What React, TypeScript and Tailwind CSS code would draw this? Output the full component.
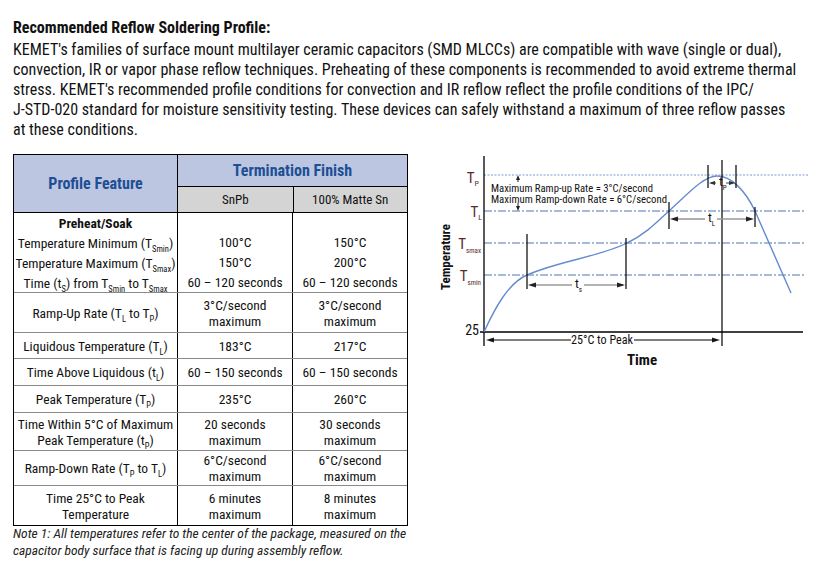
import type { ReactNode } from 'react';

const Sub = ({ children }: { children: ReactNode }) => (
  <span className="relative top-[4px] text-[8.5px] leading-none">{children}</span>
);

type Row = { h: string; feat: ReactNode; a: string[]; b: string[] };

const rows: Row[] = [
  { h: 'h-[40px]', feat: <>Ramp-Up Rate (T<Sub>L</Sub> to T<Sub>P</Sub>)</>, a: ['3°C/second', 'maximum'], b: ['3°C/second', 'maximum'] },
  { h: 'h-[26px]', feat: <>Liquidous Temperature (T<Sub>L</Sub>)</>, a: ['183°C'], b: ['217°C'] },
  { h: 'h-[27px]', feat: <>Time Above Liquidous (t<Sub>L</Sub>)</>, a: ['60 – 150 seconds'], b: ['60 – 150 seconds'] },
  { h: 'h-[27px]', feat: <>Peak Temperature (T<Sub>P</Sub>)</>, a: ['235°C'], b: ['260°C'] },
  { h: 'h-[38px]', feat: <>Time Within 5°C of Maximum<br />Peak Temperature (t<Sub>P</Sub>)</>, a: ['20 seconds', 'maximum'], b: ['30 seconds', 'maximum'] },
  { h: 'h-[35px]', feat: <>Ramp-Down Rate (T<Sub>P</Sub> to T<Sub>L</Sub>)</>, a: ['6°C/second', 'maximum'], b: ['6°C/second', 'maximum'] },
  { h: 'h-[40px]', feat: <>Time 25°C to Peak<br />Temperature</>, a: ['6 minutes', 'maximum'], b: ['8 minutes', 'maximum'] },
];

function Cell({ children, first }: { children: ReactNode; first?: boolean }) {
  return (
    <div className={`flex flex-col items-center justify-center text-center leading-[16px] ${first ? 'w-[163px]' : 'w-[115px] border-l border-black'}`}>
      {children}
    </div>
  );
}

function ProfileTable() {
  return (
    <div className="mt-[4px] w-[395px] border border-black text-[13.5px] text-[#111]">
      <div className="flex h-[58px] border-b border-black">
        <div className="flex w-[163px] items-center justify-center bg-[#bdc6e0] text-[16px] font-bold text-[#1d4f95]">
          Profile Feature
        </div>
        <div className="flex w-[230px] flex-col border-l border-black">
          <div className="flex h-[31px] items-center justify-center bg-[#bdc6e0] text-[16px] font-bold text-[#1d4f95]">
            Termination Finish
          </div>
          <div className="flex h-[26px] border-t border-black bg-[#d4d4d4] text-[13px]">
            <div className="flex w-[115px] items-center justify-center">SnPb</div>
            <div className="flex w-[115px] items-center justify-center border-l border-black">100% Matte Sn</div>
          </div>
        </div>
      </div>

      <div className="flex h-[79px] leading-[20px]">
        <div className="flex w-[163px] flex-col items-center justify-center text-center">
          <div className="font-bold">Preheat/Soak</div>
          <div>Temperature Minimum (T<Sub>Smin</Sub>)</div>
          <div>Temperature Maximum (T<Sub>Smax</Sub>)</div>
          <div>Time (t<Sub>S</Sub>) from T<Sub>Smin</Sub> to T<Sub>Smax</Sub></div>
        </div>
        <div className="flex w-[115px] flex-col items-center justify-end border-l border-black">
          <div>100°C</div>
          <div>150°C</div>
          <div>60 – 120 seconds</div>
        </div>
        <div className="flex w-[115px] flex-col items-center justify-end border-l border-black">
          <div>150°C</div>
          <div>200°C</div>
          <div>60 – 120 seconds</div>
        </div>
      </div>

      {rows.map((r, i) => (
        <div key={i} className={`flex border-t border-[#8a8a8a] ${r.h}`}>
          <Cell first>
            <div>{r.feat}</div>
          </Cell>
          <Cell>{r.a.map((l) => <div key={l}>{l}</div>)}</Cell>
          <Cell>{r.b.map((l) => <div key={l}>{l}</div>)}</Cell>
        </div>
      ))}
    </div>
  );
}

function ReflowChart() {
  const guide = '#4d74b8';
  return (
    <svg width="398" height="230" viewBox="0 0 398 230" className="ml-[12px] shrink-0">
      {/* temperature levels */}
      <line x1="64" y1="25" x2="388" y2="25" stroke="#7a9ad4" strokeDasharray="2 1.5" />
      <line x1="64" y1="61" x2="384" y2="61" stroke={guide} strokeDasharray="8 2 2 2" />
      <line x1="64" y1="93" x2="384" y2="93" stroke={guide} strokeDasharray="8 2 2 2" />
      <line x1="64" y1="125" x2="384" y2="125" stroke={guide} strokeDasharray="8 2 2 2" />

      {/* axes */}
      <line x1="64" y1="6" x2="64" y2="196" stroke="#000" strokeWidth="1.3" />
      <line x1="60" y1="182" x2="383" y2="182" stroke="#000" strokeWidth="1.3" />

      {/* profile curve */}
      <path
        d="M64,182 C74,160 88,133 107,125 C135,112 182,106 207,93 C226,84 238,71 249,61 C266,46 283,26 297,26 C311,26 325,40 335,61 L371,143"
        fill="none" stroke="#648bd0" strokeWidth="1.4"
      />

      {/* markers */}
      <g stroke="#000" strokeWidth="1.2">
        <line x1="107" y1="84" x2="107" y2="139" />
        <line x1="206" y1="88" x2="206" y2="139" />
        <line x1="249" y1="52" x2="249" y2="79" />
        <line x1="335" y1="57" x2="335" y2="77" />
        <line x1="288" y1="15" x2="288" y2="38" />
        <line x1="316" y1="15" x2="316" y2="38" />
        <line x1="302" y1="10" x2="302" y2="196" />
      </g>

      <g stroke="#9a9a9a" strokeWidth="1.6">
        <line x1="111" y1="135" x2="152" y2="135" />
        <line x1="164" y1="135" x2="203" y2="135" />
        <line x1="253" y1="69" x2="285" y2="69" />
        <line x1="297" y1="69" x2="331" y2="69" />
      </g>
      <g fill="#222">
        <polygon points="108,135 116,132.5 116,137.5" />
        <polygon points="205,135 197,132.5 197,137.5" />
        <polygon points="250,69 258,66.5 258,71.5" />
        <polygon points="334,69 326,66.5 326,71.5" />
        <polygon points="289,33 295,31 295,35" />
        <polygon points="315,33 309,31 309,35" />
        <polygon points="98,25 96,30 100,30" />
        <polygon points="98,61 96,56 100,56" />
        <polygon points="66,190 74,187.5 74,192.5" />
        <polygon points="300,190 292,187.5 292,192.5" />
      </g>
      <line x1="98" y1="29" x2="98" y2="32" stroke="#222" />
      <line x1="98" y1="53" x2="98" y2="57" stroke="#222" />
      <line x1="291" y1="33" x2="296" y2="33" stroke="#444" />
      <line x1="306" y1="33" x2="313" y2="33" stroke="#444" />

      <line x1="70" y1="190" x2="151" y2="190" stroke="#000" strokeWidth="1.2" />
      <line x1="214" y1="190" x2="296" y2="190" stroke="#000" strokeWidth="1.2" />

      {/* labels */}
      <g fill="#111">
        <text x="155" y="138" fontSize="13">t<tspan fontSize="7" dy="4">s</tspan></text>
        <text x="288" y="72" fontSize="13">t<tspan fontSize="7" dy="4">L</tspan></text>
        <text x="299" y="36" fontSize="13">t<tspan fontSize="7" dy="4">P</tspan></text>
        <text x="71" y="42" fontSize="11.5" textLength="162" lengthAdjust="spacingAndGlyphs">Maximum Ramp-up Rate = 3°C/second</text>
        <text x="71" y="52.5" fontSize="11.5" textLength="176" lengthAdjust="spacingAndGlyphs">Maximum Ramp-down Rate = 6°C/second</text>
        <text x="151" y="194" fontSize="13" textLength="62" lengthAdjust="spacingAndGlyphs">25°C to Peak</text>
        <text x="59" y="185" fontSize="14" textAnchor="end">25</text>
        <text x="222" y="215" fontSize="15" fontWeight="bold" textAnchor="middle">Time</text>
        <text x="-107" y="30" fontSize="13" fontWeight="bold" textAnchor="middle" transform="rotate(-90)">Temperature</text>
      </g>
      <g fill="#5a2a2a">
        <text x="59" y="33" fontSize="15" textAnchor="end">T<tspan fontSize="8" dy="3">P</tspan></text>
        <text x="62" y="67" fontSize="15" textAnchor="end">T<tspan fontSize="8" dy="3">L</tspan></text>
        <text x="61" y="99" fontSize="15" textAnchor="end">T<tspan fontSize="7" dy="4">smax</tspan></text>
        <text x="61" y="131" fontSize="15" textAnchor="end">T<tspan fontSize="7" dy="4">smin</tspan></text>
      </g>
    </svg>
  );
}

export default function App() {
  return (
    <div className="min-h-screen bg-white pl-[13px] pt-[18px] font-['Roboto_Condensed',sans-serif] text-[#111]">
      <h1 className="text-[16px] font-bold leading-[20px]">Recommended Reflow Soldering Profile:</h1>
      <div className="mt-[2px] text-[16px] leading-[20px] whitespace-nowrap">
        <div>KEMET's families of surface mount multilayer ceramic capacitors (SMD MLCCs) are compatible with wave (single or dual),</div>
        <div>convection, IR or vapor phase reflow techniques. Preheating of these components is recommended to avoid extreme thermal</div>
        <div>stress. KEMET's recommended profile conditions for convection and IR reflow reflect the profile conditions of the IPC/</div>
        <div>J-STD-020 standard for moisture sensitivity testing. These devices can safely withstand a maximum of three reflow passes</div>
        <div>at these conditions.</div>
      </div>

      <div className="mt-[10px] flex items-start">
        <div>
          <ProfileTable />
          <p className="-mt-[1px] text-[13.5px] italic leading-[17px] text-[#222]">
            Note 1: All temperatures refer to the center of the package, measured on the
            <br />
            capacitor body surface that is facing up during assembly reflow.
          </p>
        </div>
        <ReflowChart />
      </div>
    </div>
  );
}
